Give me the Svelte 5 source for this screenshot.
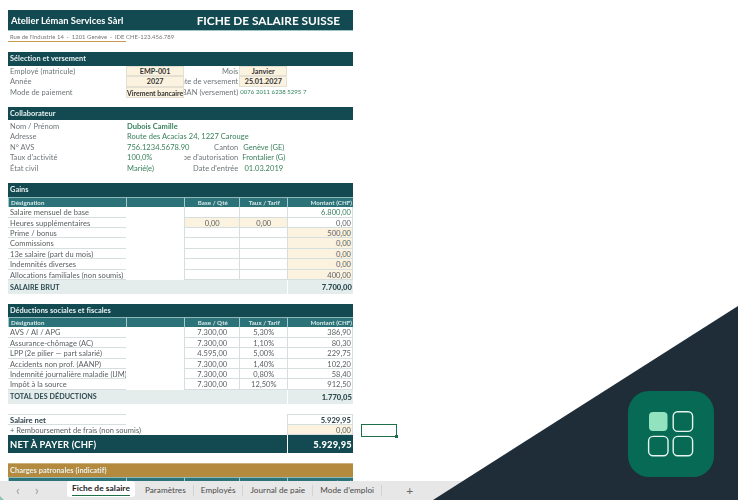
<script>
	const gains = [
		["Salaire mensuel de base", "", "", "6.800,00", "", "green"],
		["Heures supplémentaires", "0,00", "0,00", "0,00", "inputs", ""],
		["Prime / bonus", "", "", "500,00", "amount", ""],
		["Commissions", "", "", "0,00", "amount", ""],
		["13e salaire (part du mois)", "", "", "0,00", "amount", ""],
		["Indemnités diverses", "", "", "0,00", "amount", ""],
		["Allocations familiales (non soumis)", "", "", "400,00", "amount", ""]
	];
	const deductions = [
		["AVS / AI / APG", "7.300,00", "5,30%", "386,90"],
		["Assurance-chômage (AC)", "7.300,00", "1,10%", "80,30"],
		["LPP (2e pilier — part salarié)", "4.595,00", "5,00%", "229,75"],
		["Accidents non prof. (AANP)", "7.300,00", "1,40%", "102,20"],
		["Indemnité journalière maladie (IJM)", "7.300,00", "0,80%", "58,40"],
		["Impôt à la source", "7.300,00", "12,50%", "912,50"]
	];
	const tabs = ["Paramètres", "Employés", "Journal de paie", "Mode d'emploi"];
</script>

<div class="page">
	<div class="sheet">
		<div class="banner">
			<span class="company">Atelier Léman Services Sàrl</span>
			<span class="title">FICHE DE SALAIRE SUISSE</span>
		</div>
		<div class="address">Rue de l'Industrie 14 &nbsp;·&nbsp; 1201 Genève &nbsp;·&nbsp; IDE CHE-123.456.789</div>
		<div class="rule"></div>

		<div class="section first">Sélection et versement</div>
		<div class="grid picks">
			<div class="label">Employé (matricule)</div>
			<div class="input">EMP-001</div>
			<div class="rlabel"><span>Mois</span></div>
			<div class="input">Janvier</div>
			<div></div>
			<div class="label">Année</div>
			<div class="input">2027</div>
			<div class="rlabel"><span>Date de versement</span></div>
			<div class="input">25.01.2027</div>
			<div></div>
			<div class="label">Mode de paiement</div>
			<div class="input tight">Virement bancaire</div>
			<div class="rlabel"><span>IBAN (versement)</span></div>
			<div class="iban">0076 2011 6238 5295 7</div>
		</div>

		<div class="section collab">Collaborateur</div>
		<div class="grid infos">
			<div class="label">Nom / Prénom</div>
			<div class="val strong wide">Dubois Camille</div>
			<div class="label">Adresse</div>
			<div class="val wide">Route des Acacias 24, 1227 Carouge</div>
			<div class="label">N° AVS</div>
			<div class="val">756.1234.5678.90</div>
			<div class="rlabel"><span>Canton</span></div>
			<div class="val mid">Genève (GE)</div>
			<div></div>
			<div class="label">Taux d'activité</div>
			<div class="val">100,0%</div>
			<div class="rlabel"><span>Type d'autorisation</span></div>
			<div class="val mid">Frontalier (G)</div>
			<div></div>
			<div class="label">État civil</div>
			<div class="val">Marié(e)</div>
			<div class="rlabel"><span>Date d'entrée</span></div>
			<div class="val mid">01.03.2019</div>
		</div>

		<div class="section gains">Gains</div>
		<div class="grid">
			<div class="th">Désignation</div>
			<div class="th"></div>
			<div class="th center">Base / Qté</div>
			<div class="th center">Taux / Tarif</div>
			<div class="th right">Montant (CHF)</div>
			{#each gains as row}
				<div class="name">{row[0]}</div>
				<div></div>
				<div class="num" class:cream={row[4] === "inputs"}>{row[1]}</div>
				<div class="num" class:cream={row[4] === "inputs"}>{row[2]}</div>
				<div class="amt" class:cream={row[4] === "amount"} class:greenval={row[5] === "green"}>{row[3]}</div>
			{/each}
		</div>
		<div class="total">
			<span>SALAIRE BRUT</span>
			<b>7.700,00</b>
		</div>

		<div class="section ded">Déductions sociales et fiscales</div>
		<div class="grid">
			<div class="th">Désignation</div>
			<div class="th"></div>
			<div class="th center">Base / Qté</div>
			<div class="th center">Taux / Tarif</div>
			<div class="th right">Montant (CHF)</div>
			{#each deductions as row}
				<div class="name">{row[0]}</div>
				<div></div>
				<div class="num">{row[1]}</div>
				<div class="num">{row[2]}</div>
				<div class="amt">{row[3]}</div>
			{/each}
		</div>
		<div class="total">
			<span>TOTAL DES DÉDUCTIONS</span>
			<b>1.770,05</b>
		</div>

		<div class="grid net">
			<div class="name strong-dark">Salaire net</div>
			<div></div>
			<div></div>
			<div></div>
			<div class="amt strong-dark">5.929,95</div>
			<div class="name spill">+ Remboursement de frais (non soumis)</div>
			<div></div>
			<div></div>
			<div></div>
			<div class="amt cream">0,00</div>
		</div>
		<div class="pay">
			<span>NET À PAYER (CHF)</span>
			<b>5.929,95</b>
		</div>

		<div class="section gold">Charges patronales (indicatif)</div>
		<div class="grid">
			<div class="th">Désignation</div>
			<div class="th"></div>
			<div class="th center">Base / Qté</div>
			<div class="th center">Taux / Tarif</div>
			<div class="th right">Montant (CHF)</div>
		</div>

		<div class="selected"></div>
	</div>

	<div class="tabbar">
		<span class="nav">‹</span>
		<span class="nav">›</span>
		<div class="tab active"><span>Fiche de salaire</span></div>
		{#each tabs as tab}
			<div class="tab">{tab}</div>
		{/each}
		<span class="plus">+</span>
	</div>

	<svg class="corner" width="738" height="500" viewBox="0 0 738 500" aria-hidden="true">
		<polygon points="0,496 4,500 0,500" fill="#8fc4ad" />
		<polygon points="738,306 738,500 433,500" fill="#1f2d38" />
		<rect x="628" y="391" width="86" height="86" rx="21" fill="#066a54" />
		<rect x="649" y="412" width="18.5" height="19" rx="4" fill="#93e2bf" />
		<g fill="none" stroke="#e6f5ef" stroke-width="1.4">
			<rect x="673.2" y="411.8" width="19.4" height="19.6" rx="4.5" />
			<rect x="648.6" y="436.4" width="19.4" height="19.4" rx="4.5" />
			<rect x="673.2" y="436.4" width="19.4" height="19.4" rx="4.5" />
		</g>
	</svg>
</div>

<style>
	:global(body) {
		margin: 0;
		background: #fff;
	}

	.page {
		position: relative;
		width: 738px;
		height: 500px;
		overflow: hidden;
		display: flex;
		flex-direction: column;
		font-family: "Lato", sans-serif;
		font-size: 7.5px;
		letter-spacing: 0.04px;
		color: #5a6062;
	}

	.sheet {
		position: relative;
		flex: 1;
		min-height: 0;
		overflow: hidden;
		padding: 10px 0 0 8px;
		filter: blur(0.3px);
	}

	.banner {
		width: 345px;
		height: 21px;
		background: #134a52;
		border-bottom: 1px solid #9cc4c4;
		box-sizing: border-box;
		display: flex;
		align-items: center;
		justify-content: space-between;
		padding: 0 13px 0 3px;
		color: #fff;
		font-weight: 700;
		letter-spacing: 0;
	}

	.company {
		font-size: 9.4px;
	}

	.title {
		font-size: 11.8px;
	}

	.address {
		height: 9px;
		line-height: 10px;
		padding: 1px 0 0 2px;
		font-size: 5.9px;
		color: #777;
		white-space: nowrap;
	}

	.rule {
		width: 118px;
		height: 1px;
		background: #c79a55;
		margin-bottom: 10px;
	}

	.section {
		width: 345px;
		height: 13.5px;
		line-height: 13px;
		padding-left: 2px;
		box-sizing: border-box;
		background: #134a52;
		color: #e8f1f1;
		font-size: 7.4px;
		font-weight: 700;
	}

	.collab {
		margin-top: 9.4px;
	}

	.gains {
		margin-top: 9.5px;
	}

	.ded {
		margin-top: 9.5px;
	}

	.gold {
		margin-top: 10px;
		background: #b48a3e;
		border-top: 1px solid #cdb27c;
	}

	.grid {
		display: grid;
		width: 345px;
		grid-template-columns: 118px 58.3px 55px 48px 65.7px;
		grid-auto-rows: 10.4px;
		line-height: 10.4px;
		white-space: nowrap;
	}

	.picks {
		grid-auto-rows: 10.7px;
		line-height: 10.7px;
	}

	.picks .label,
	.picks .rlabel {
		line-height: 11.7px;
	}

	.infos {
		padding-top: 1.5px;
	}

	.label {
		padding-left: 2px;
		overflow: hidden;
		color: #6e7578;
	}

	.rlabel {
		display: flex;
		justify-content: flex-end;
		overflow: hidden;
		padding-right: 1px;
		color: #6e7578;
	}

	.rlabel span {
		flex: none;
	}

	.input {
		background: #fbf2df;
		border: 0.5px solid #e4e0d2;
		box-sizing: border-box;
		text-align: center;
		font-weight: 700;
		font-size: 7.2px;
		color: #333;
	}

	.input.tight {
		font-size: 6.9px;
		letter-spacing: 0;
		grid-column: 2;
	}

	.iban {
		grid-column: 4 / 6;
		padding-left: 1px;
		font-size: 6px;
		color: #2f7f5a;
	}

	.val {
		padding-left: 1px;
		color: #38805c;
	}

	.val.wide {
		grid-column: 2 / 6;
	}

	.val.strong {
		font-weight: 700;
	}

	.val.mid {
		text-align: center;
	}

	.th {
		background: #2b7378;
		border-top: 0.5px solid #8fb9ba;
		border-left: 0.5px solid #a6c9c9;
		box-sizing: border-box;
		color: #d9e8e8;
		font-size: 6.2px;
		font-weight: 700;
		padding: 0 1px 0 2px;
	}

	.th.center {
		text-align: center;
	}

	.th.right {
		text-align: right;
	}

	.name {
		padding-left: 2px;
		border-bottom: 0.5px solid #d6dfdf;
		box-sizing: border-box;
		overflow: hidden;
		line-height: 11.4px;
	}

	.name.spill {
		overflow: visible;
		border-bottom: 0;
	}

	.num,
	.amt {
		border-bottom: 0.5px solid #d6dfdf;
		border-left: 0.5px solid #d6dfdf;
		box-sizing: border-box;
		line-height: 11.4px;
	}

	.num {
		text-align: center;
	}

	.amt {
		text-align: right;
		padding-right: 1px;
		border-right: 0.5px solid #d6dfdf;
	}

	.cream {
		background: #fbf2df;
	}

	.greenval {
		color: #38805c;
	}

	.total {
		width: 345px;
		height: 14px;
		background: #e5ecec;
		display: flex;
		justify-content: space-between;
		align-items: center;
		padding-left: 2px;
		box-sizing: border-box;
		font-size: 7.2px;
		font-weight: 700;
		color: #2c4a50;
	}

	.total b,
	.pay b {
		align-self: stretch;
		display: flex;
		align-items: center;
		justify-content: flex-end;
		width: 65.7px;
		box-sizing: border-box;
		padding-right: 1px;
		border-left: 0.5px solid #fff;
	}

	.total b {
		font-size: 7.6px;
	}

	.net {
		margin-top: 10.5px;
	}

	.strong-dark {
		font-weight: 700;
		font-size: 7.6px;
		color: #2c4047;
		border-top: 0.5px solid #d6dfdf;
	}

	.pay {
		width: 345px;
		height: 18px;
		background: #134a52;
		display: flex;
		justify-content: space-between;
		align-items: center;
		padding-left: 2px;
		box-sizing: border-box;
		color: #fff;
		font-weight: 700;
		font-size: 9.4px;
		letter-spacing: 0.2px;
	}

	.selected {
		position: absolute;
		left: 361px;
		top: 424px;
		width: 34px;
		height: 11px;
		border: 1px solid #1e6f48;
	}

	.selected::after {
		content: "";
		position: absolute;
		right: -2px;
		bottom: -2px;
		width: 3px;
		height: 3px;
		background: #1e6f48;
	}

	.tabbar {
		flex: none;
		height: 19px;
		background: #e7e7e7;
		display: flex;
		align-items: center;
		padding-left: 16px;
		box-sizing: border-box;
		font-size: 8.2px;
		color: #4a4a4a;
		white-space: nowrap;
	}

	.nav {
		width: 19px;
		font-size: 13px;
		line-height: 13px;
		color: #9a9a9a;
	}

	.tab {
		padding: 0 7px;
		border-right: 1px solid #d2d2d2;
		line-height: 11px;
	}

	.tab.active {
		align-self: flex-start;
		background: #fff;
		border: 0;
		border-radius: 3px;
		height: 16px;
		line-height: 15px;
		margin: 0 3px 0 13px;
		padding: 0 5px;
		color: #222;
		font-weight: 700;
		font-size: 8.4px;
	}

	.tab.active span {
		display: block;
		height: 14px;
		border-bottom: 1px solid #1e7145;
	}

	.plus {
		margin-left: 24px;
		font-size: 12px;
		color: #666;
	}

	.corner {
		position: absolute;
		left: 0;
		top: 0;
		pointer-events: none;
	}
</style>
